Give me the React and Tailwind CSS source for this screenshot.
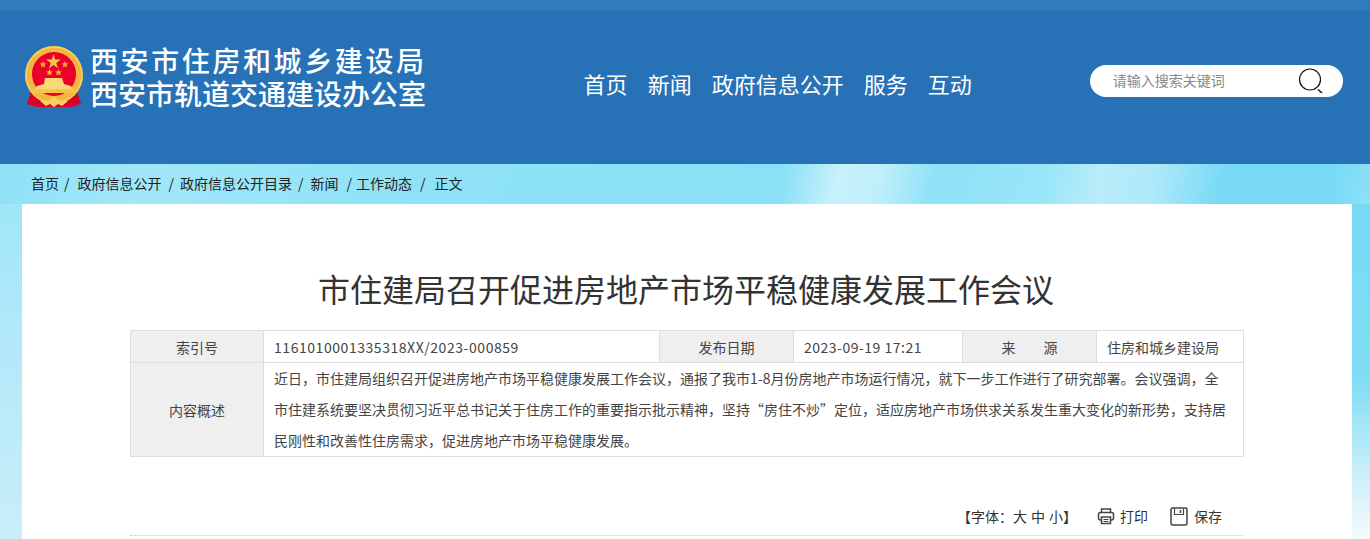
const NAV = ["首页", "新闻", "政府信息公开", "服务", "互动"];

const CRUMBS = [
  { label: "首页", sep: "ml-[5px] mr-[8px]" },
  { label: "政府信息公开", sep: "ml-[7px] mr-[6px]" },
  { label: "政府信息公开目录", sep: "ml-[6px] mr-[7px]" },
  { label: "新闻", sep: "ml-[8px] mr-[4px]" },
  { label: "工作动态", sep: "ml-[8px] mr-[9px]" },
];

function Emblem() {
  return (
    <svg width="60" height="62" viewBox="0 0 60 62" className="shrink-0">
      <path d="M8 42 L3 58 L13 61 L47 61 L57 58 L52 42 Z" fill="#d9002a" />
      <circle cx="30" cy="29" r="29" fill="#f3b63f" />
      <circle cx="30" cy="29" r="28" fill="none" stroke="#f9cf62" strokeWidth="1.5" />
      <circle cx="30" cy="28" r="22" fill="#ea0029" />
      <path
        d="M29.500 8 L31.200 13.500 L37 13.500 L32.300 17 L34 22.500 L29.500 19 L25 22.500 L26.700 17 L22 13.500 L27.800 13.500 Z"
        fill="#f6c544"
      />
      <path d="M19 15 l1 2.300 2.500 .2 -1.900 1.600 .6 2.400 -2.200 -1.300 -2.200 1.300 .6 -2.400 -1.900 -1.600 2.500 -.2 Z" fill="#f0a93a" />
      <path d="M41 15 l1 2.300 2.500 .2 -1.900 1.600 .6 2.400 -2.200 -1.300 -2.200 1.300 .6 -2.400 -1.900 -1.600 2.500 -.2 Z" fill="#f0a93a" />
      <path d="M25.500 23 l1 2.300 2.500 .2 -1.900 1.600 .6 2.400 -2.200 -1.300 -2.200 1.300 .6 -2.400 -1.900 -1.600 2.500 -.2 Z" fill="#f0a93a" />
      <path d="M34.500 23 l1 2.300 2.500 .2 -1.900 1.600 .6 2.400 -2.200 -1.300 -2.200 1.300 .6 -2.400 -1.900 -1.600 2.500 -.2 Z" fill="#f0a93a" />
      <path d="M21 32 L38 32 L40 38 L47 40 L49 43 L11 43 L13 40 L20 38 Z" fill="#fbd877" />
      <rect x="8" y="43" width="44" height="4" fill="#f6c544" />
      <path d="M9 47 Q30 58 51 47 L48 50 Q30 60 12 50 Z" fill="#f3b63f" />
      <path d="M16 55 L26 54 L30 50 L34 54 L44 55 L38 60 L34 58 L30 61 L26 58 L22 60 Z" fill="#f9cf62" />
    </svg>
  );
}

function SearchIcon() {
  return (
    <svg width="26" height="26" viewBox="0 0 26 26" fill="none" stroke="#111" className="shrink-0">
      <circle cx="12" cy="11.500" r="10.500" strokeWidth="1.200" />
      <path d="M20 21.500 L24 25" strokeWidth="1.500" />
    </svg>
  );
}

function PrintIcon() {
  return (
    <svg width="18" height="18" viewBox="0 0 18 18" fill="none" stroke="#444" strokeWidth="1.500" className="shrink-0">
      <path d="M4.500 5.500 V2 H13.500 V5.500" />
      <rect x="1.500" y="5.500" width="15" height="7.500" rx="2" />
      <rect x="4.500" y="10" width="9" height="6.500" fill="#fff" />
      <path d="M6.500 12.500 H11.500 M6.500 14.500 H11.500" strokeWidth="1" />
    </svg>
  );
}

function SaveIcon() {
  return (
    <svg width="18" height="19" viewBox="0 0 18 19" fill="none" stroke="#444" className="shrink-0">
      <rect x="1" y="1" width="16" height="17" rx="1.500" strokeWidth="1.500" />
      <path d="M4.500 1.500 V7.500 H13.500 V1.500" strokeWidth="1.200" />
      <path d="M10.500 3 V6" strokeWidth="1.500" />
    </svg>
  );
}

function Label({ className = "", children }) {
  return (
    <div className={`flex items-center justify-center bg-[#efefef] ${className}`}>{children}</div>
  );
}

export default function App() {
  return (
    <div
      className="h-[539px] w-[1370px] overflow-hidden text-[#333]"
      style={{ fontFamily: '"Noto Sans CJK SC", "Noto Sans", sans-serif' }}
    >
      <header className="h-[164px] bg-[#2771b6]">
        <div className="h-[10px] bg-[#317abb]" />
        <div className="flex h-[154px] items-start pl-[24px]">
          <div className="mt-[34px] flex items-center gap-[6px]">
            <Emblem />
            <div className="font-medium text-white text-[28px] leading-[33px]">
              <div className="tracking-[2.6px]">西安市住房和城乡建设局</div>
              <div>西安市轨道交通建设办公室</div>
            </div>
          </div>
          <nav className="mt-[57px] ml-[157px] flex gap-5 text-[22px] leading-[32px] text-white">
            {NAV.map((item) => (
              <span key={item}>{item}</span>
            ))}
          </nav>
          <div className="mt-[55px] ml-[118px] flex h-[32px] w-[253px] items-center justify-between rounded-full bg-white pl-[23px] pr-[19px]">
            <span className="-mt-[2px] text-sm text-[#888]">请输入搜索关键词</span>
            <SearchIcon />
          </div>
        </div>
      </header>

      <div className="flex h-10 items-center bg-[linear-gradient(100deg,#8fe1f7_0%,#a2e7f9_10%,#8fe2f7_30%,#8ae0f6_57%,#c8f1fb_61%,#c0effa_64%,#90e2f7_68%,#98e5f8_76%,#b8ecfa_80%,#aee9f9_84%,#78daf5_89%,#78daf5_97%,#8fe0f6_100%)] pb-[2px] pl-[31px] text-sm text-[#222]">
        {CRUMBS.map((c) => (
          <span key={c.label} className="flex">
            {c.label}
            <span className={c.sep}>/</span>
          </span>
        ))}
        <span>正文</span>
      </div>

      <div className="flex h-[335px]">
        <div className="w-[22px] bg-[linear-gradient(to_bottom,#9fe6f9_0%,#b4e9f9_45%,#c9eef8_100%)]" />
        <main className="w-[1330px] bg-white px-[108px] pt-[60px]">
          <h1 className="pr-[2px] text-center text-[32px] leading-[48px] text-[#333]">
            市住建局召开促进房地产市场平稳健康发展工作会议
          </h1>

          <div className="mt-[18px] w-[1114px] border border-[#dedede] text-sm text-[#444]">
            <div className="flex h-[32px] border-b border-[#dedede]">
              <Label className="w-[133px] border-r border-[#dedede]">索引号</Label>
              <div className="flex w-[396px] items-center border-r border-[#dedede] pl-[10px] tracking-[0.55px]">1161010001335318XX/2023-000859</div>
              <Label className="w-[134px] border-r border-[#dedede]">发布日期</Label>
              <div className="flex w-[169px] items-center border-r border-[#dedede] pl-[10px] tracking-[0.5px]">2023-09-19 17:21</div>
              <Label className="w-[134px] gap-7 border-r border-[#dedede]">
                <span>来</span>
                <span>源</span>
              </Label>
              <div className="flex flex-1 items-center pl-[10px]">住房和城乡建设局</div>
            </div>
            <div className="flex h-[93px]">
              <Label className="w-[133px] border-r border-[#dedede]">内容概述</Label>
              <p className="flex-1 pl-[10px] pr-[16px] leading-[31px]">
                近日，市住建局组织召开促进房地产市场平稳健康发展工作会议，通报了我市1-8月份房地产市场运行情况，就下一步工作进行了研究部署。会议强调，全市住建系统要坚决贯彻习近平总书记关于住房工作的重要指示批示精神，坚持“房住不炒”定位，适应房地产市场供求关系发生重大变化的新形势，支持居民刚性和改善性住房需求，促进房地产市场平稳健康发展。
              </p>
            </div>
          </div>

          <div className="mt-[46px] flex h-[33px] items-center justify-end border-b border-dotted border-[#ccc] pr-[22px] pb-[6px] text-sm text-[#333]">
            <span>【字体：</span>
            <span>大</span>
            <span className="ml-[4px]">中</span>
            <span className="ml-[4px]">小</span>
            <span>】</span>
            <span className="ml-[20px] flex items-center gap-[5px]">
              <PrintIcon />
              打印
            </span>
            <span className="ml-[22px] flex items-center gap-[6px]">
              <SaveIcon />
              保存
            </span>
          </div>
        </main>
        <div className="w-[18px] bg-[linear-gradient(to_bottom,#78d9f4_0%,#80dcf5_52%,#bcebf8_75%,#f6fbfd_100%)]" />
      </div>
    </div>
  );
}
